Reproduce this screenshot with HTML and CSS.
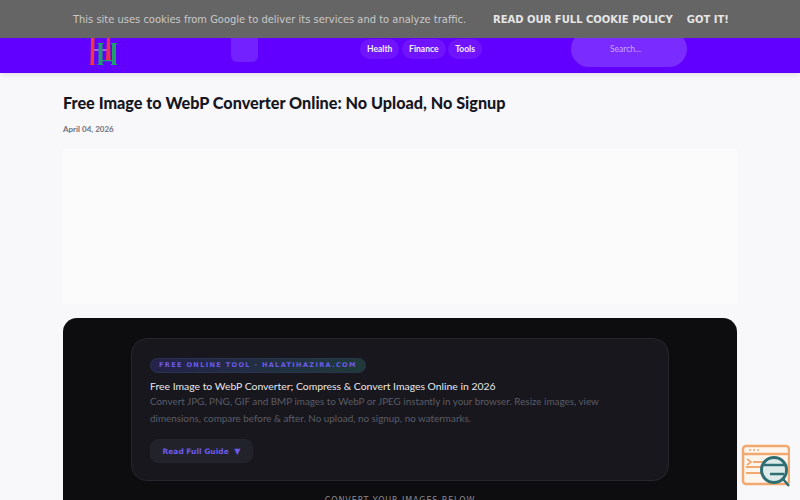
FILE: index.html
```html
<!DOCTYPE html>
<html lang="en">

<head>
    <meta charset="UTF-8">
    <meta name="viewport" content="width=device-width, initial-scale=1.0">
    <title>Free Image to WebP Converter Online</title>
    <link rel="stylesheet" href="styles.css">
</head>

<body>
    <div class="cookie-bar">
        <span class="cookie-text">This site uses cookies from Google to deliver its services and to analyze traffic.</span>
        <a class="cookie-link cookie-policy">Read our full cookie policy</a>
        <a class="cookie-link cookie-ok">Got it!</a>
    </div>

    <header class="site-header">
        <svg class="logo" width="28" height="38" viewBox="0 0 28 38" aria-hidden="true">
            <path d="M5 22h13" stroke="#d8c8ff" stroke-width="1" fill="none"/>
            <path d="M2 10h3.500l-.5 26 1.500 1H.5l1-1z" fill="#f2383f"/>
            <path d="M18 10h3l.5 22h-4.500z" fill="#e8304f"/>
            <path d="M8.500 15h6v1h-1v20h1v1h-6v-1h1V16h-1z M22 15h6v1h-1v20h1v1h-6v-1h1V16h-1z M13 32h10v1.200H13z" fill="#1f9d6c"/>
        </svg>
        <div class="menu-btn"></div>
        <nav class="nav">
            <a class="nav-pill">Health</a>
            <a class="nav-pill">Finance</a>
            <a class="nav-pill">Tools</a>
        </nav>
        <div class="search">Search...</div>
    </header>

    <main class="page">
        <h1 class="post-title">Free Image to WebP Converter Online: No Upload, No Signup</h1>
        <p class="post-date">April 04, 2026</p>
        <div class="ad-slot"></div>

        <section class="tool">
            <div class="intro">
                <span class="badge">FREE ONLINE TOOL · HALATIHAZIRA.COM</span>
                <h2 class="intro-title">Free Image to WebP Converter; Compress &amp; Convert Images Online in 2026</h2>
                <p class="intro-text">Convert JPG, PNG, GIF and BMP images to WebP or JPEG instantly in your browser. Resize images, view dimensions, compare before &amp; after. No upload, no signup, no watermarks.</p>
                <button class="guide-btn">Read Full Guide <span class="guide-arrow">▼</span></button>
            </div>
            <p class="tool-label">CONVERT YOUR IMAGES BELOW</p>
        </section>
    </main>

    <svg class="float-icon" width="50" height="50" viewBox="0 0 50 50" aria-hidden="true">
        <rect x="3" y="8" width="46" height="38" rx="3" fill="#fdf6ef" stroke="#f2a970" stroke-width="2.500"/>
        <path d="M3 16h46" stroke="#f2a970" stroke-width="2.500"/>
        <path d="M9 12h2M13 12h2M17 12h2" stroke="#f2a970" stroke-width="1.500"/>
        <path d="M7 21l4 3-4 3M13 24h10M6 29h15M6 35h15" stroke="#f2a970" stroke-width="1.800" fill="none"/>
        <circle cx="34" cy="32" r="12.500" fill="#dcebea" stroke="#2f6f73" stroke-width="3"/>
        <path d="M24 27h20M30 36h14M43 41l6 7" stroke="#2f6f73" stroke-width="2.500" fill="none"/>
    </svg>
</body>

</html>
```

FILE: styles.css
```css
html {
    overflow: hidden;
}

body {
    margin: 0;
    background: #f8f8fb;
    font-family: Lato, sans-serif;
}

.cookie-bar {
    position: fixed;
    top: 0;
    left: 0;
    right: 0;
    height: 38px;
    z-index: 5;
    display: flex;
    align-items: center;
    padding-left: 73px;
    background: #656565;
    font-family: "DejaVu Sans", sans-serif;
    font-size: 10px;
    color: #c9c9c9;
    white-space: nowrap;
}

.cookie-text {
    width: 420px;
    font-size: 9.930px;
}

.cookie-link {
    font-weight: bold;
    text-transform: uppercase;
    color: #e6e6e6;
}

.cookie-policy {
    margin-right: 14px;
}

.site-header {
    height: 73px;
    display: flex;
    align-items: flex-start;
    background: #6200ff;
    box-shadow: 0 1px 6px rgba(0, 0, 0, .12);
}

.logo {
    margin: 28px 0 0 89px;
}

.menu-btn {
    width: 27px;
    height: 30px;
    margin: 32px 0 0 114px;
    border-radius: 6px;
    background: #7421ff;
}

.nav {
    width: 122px;
    display: flex;
    justify-content: space-between;
    margin: 39px 0 0 102px;
}

.nav-pill {
    height: 20px;
    padding: 0 7px;
    border-radius: 10px;
    background: #7014ff;
    color: #f4eeff;
    font-size: 8.500px;
    font-weight: 700;
    line-height: 20px;
}

.search {
    width: 116px;
    height: 36px;
    margin: 31px 0 0 89px;
    padding-left: 39px;
    box-sizing: border-box;
    border-radius: 18px;
    background: #7a2bff;
    color: #c9a8ff;
    font-size: 8.500px;
    line-height: 36px;
}

.page {
    width: 674px;
    margin: 0 auto;
}

.post-title {
    margin: 19px 0 0;
    color: #16161f;
    font-size: 16.200px;
    font-weight: 900;
    line-height: 21px;
}

.post-date {
    margin: 10px 0 0;
    color: #70707a;
    font-size: 8px;
    font-weight: 700;
    line-height: 12px;
}

.ad-slot {
    height: 155px;
    margin-top: 14px;
    background: #fbfbfc;
}

.tool {
    margin-top: 14px;
    padding: 20px 68px 0;
    border-radius: 14px 14px 0 0;
    background: #0d0d0f;
}

.intro {
    height: 143px;
    box-sizing: border-box;
    padding: 19px 18px;
    border: 1px solid #26262c;
    border-radius: 16px;
    background: #17171d;
}

.badge {
    display: block;
    width: fit-content;
    padding: 0 8px;
    border-radius: 8px;
    background: linear-gradient(90deg, #24224a, #1e3a38);
    border: 1px solid #2c3350;
    color: #6d5ae8;
    font-family: "DejaVu Sans", sans-serif;
    font-size: 6.500px;
    font-weight: 700;
    letter-spacing: 1.370px;
    line-height: 13px;
}

.intro-title {
    margin: 7px 0 0;
    color: #e8e8ec;
    font-family: Lato, sans-serif;
    font-size: 10.400px;
    font-weight: 400;
    line-height: 13px;
}

.intro-text {
    margin: 0;
    color: #5c5c66;
    font-family: Lato, sans-serif;
    font-size: 9.870px;
    line-height: 17px;
}

.guide-btn {
    display: block;
    width: 103px;
    height: 24px;
    margin-top: 12px;
    padding: 0;
    border: 1px solid #24242c;
    border-radius: 8px;
    background: #22222b;
    color: #6d5ae8;
    font-family: "DejaVu Sans", sans-serif;
    font-size: 7.500px;
    font-weight: 700;
}

.guide-arrow {
    margin-left: 3px;
    font-size: 8px;
}

.tool-label {
    margin: 14px 0 0;
    color: #8a8a92;
    font-family: "DejaVu Sans", sans-serif;
    font-size: 8px;
    letter-spacing: .9px;
    line-height: 12px;
    text-align: center;
}

.float-icon {
    position: fixed;
    right: 10px;
    bottom: 12px;
}
```
